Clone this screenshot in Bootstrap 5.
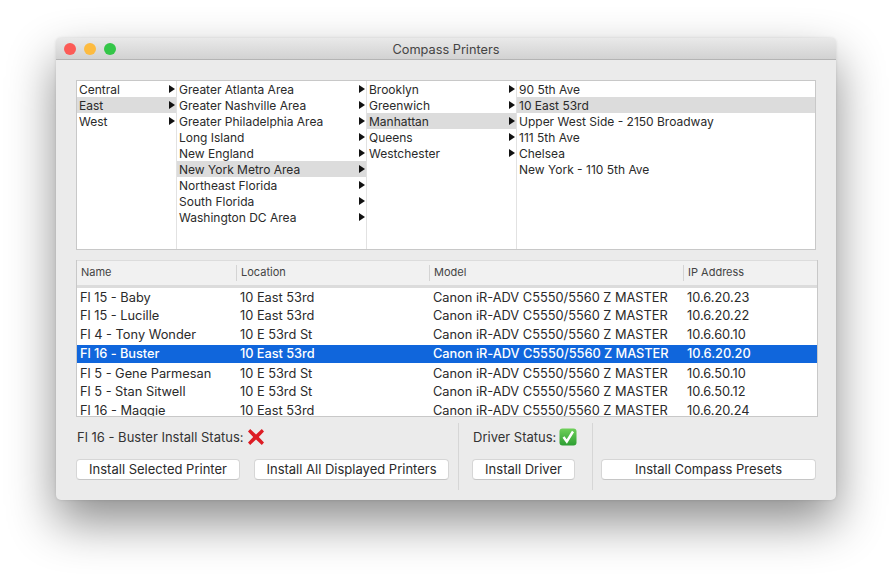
<!DOCTYPE html>
<html lang="en">
    <head>
        <meta charset="UTF-8">
        <title>Compass Printers</title>
        <link rel="stylesheet" href="https://cdn.jsdelivr.net/npm/bootstrap@5.3.0/dist/css/bootstrap.min.css">
        <style>
            body {
                background-color: #fff;
                color: #2a2a2a;
                font-family: "Inter", "Liberation Sans", sans-serif;
                font-size: 13px;
                min-height: 574px;
                padding: 38px 0 0 56px;
            }
            .mac-window {
                width: 780px;
                height: 462px;
                background-color: #ebebeb;
                border-radius: 5px;
                box-shadow: 0 22px 48px rgba(0, 0, 0, .45), 0 0 3px rgba(0, 0, 0, .12);
                overflow: hidden;
            }
            .title-bar {
                height: 22px;
                background: linear-gradient(#e9e9e9, #d2d2d2);
                border-bottom: 1px solid #b4b4b4;
                padding-left: 8px;
                position: relative;
            }
            .title-text {
                width: 100%;
                position: absolute;
                left: 0;
                top: 4px;
                text-align: center;
                color: #444;
                font-size: 12.75px;
                line-height: 16px;
            }
            .light {
                width: 12px;
                height: 12px;
                border-radius: 50%;
            }
            .light-red { background-color: #fc5b57; }
            .light-yellow { background-color: #fdbb40; }
            .light-green { background-color: #34c648; }
            .browser-box {
                width: 740px;
                height: 170px;
                margin: 20px 0 0 20px;
                background-color: #fff;
                border: 1px solid #c8c8c8;
            }
            .browser-col {
                border-right: 1px solid #e2e2e2;
                height: 100%;
                font-size: 12px;
                --bs-list-group-bg: transparent;
                --bs-list-group-border-width: 0;
                --bs-list-group-item-padding-x: 2px;
                --bs-list-group-item-padding-y: 0;
                --bs-list-group-color: #2a2a2a;
            }
            .browser-col .list-group-item {
                height: 16px;
                line-height: 16px;
                white-space: nowrap;
            }
            .browser-col .list-group-item span:first-child { padding-top: 2px; }
            .browser-col .list-group-item.picked { background-color: #dcdcdc; }
            .browser-col:last-child { border-right: 0; }
            .col-region { width: 100px; flex: none; }
            .col-area { width: 190px; flex: none; }
            .col-borough { width: 150px; flex: none; }
            .col-site { flex: 1; }
            .arrow {
                width: 0;
                height: 0;
                border-left: 6px solid #111;
                border-top: 4px solid transparent;
                border-bottom: 4px solid transparent;
                margin-right: -1px;
            }
            .table-box {
                width: 742px;
                height: 157px;
                margin: 10px 0 0 20px;
                background-color: #fff;
                border: 1px solid #c8c8c8;
                border-top: 0;
                overflow: hidden;
            }
            .printer-table {
                table-layout: fixed;
                margin: 0;
                --bs-table-bg: transparent;
                --bs-table-color: #2a2a2a;
                font-size: 12.8px;
            }
            .printer-table th {
                height: 26px;
                padding: 0 4px 3px;
                background-color: #f1f1f1;
                border-top: 1px solid #dcdcdc;
                border-bottom: 3px solid #dcdcdc;
                color: #444;
                font-size: 11px;
                font-weight: 400;
                line-height: 20px;
                position: relative;
            }
            .printer-table th + th::before {
                content: "";
                position: absolute;
                left: -1px;
                top: 4px;
                bottom: 4px;
                border-left: 1px solid #d4d4d4;
            }
            .printer-table td {
                height: 19px;
                padding: 1px 3px 0;
                border: 0;
                line-height: 17px;
                white-space: nowrap;
            }
            .printer-table tr.picked td {
                background-color: #1066dc;
                border-top: 1px solid #fff;
                border-bottom: 1px solid #fff;
                padding-top: 0;
                color: #fff;
                font-weight: 500;
                letter-spacing: -.05px;
            }
            .footer-bar {
                height: 67px;
                margin: 6px 0 0 0;
            }
            .footer-left { width: 402px; flex: none; padding-left: 20px; }
            .footer-mid { width: 134px; flex: none; padding-left: 13px; border-left: 1px solid #d6d6d6; }
            .footer-right { flex: 1; padding-left: 8px; border-left: 1px solid #d6d6d6; }
            .status-line {
                height: 28px;
                display: flex;
                align-items: center;
                gap: 3px;
                color: #333;
            }
            .status-line span { padding: 2px 0 0 1px; }
            .button-row { gap: 14px; }
            .mac-btn {
                height: 21px;
                padding: 0;
                margin-top: 8px;
                background-color: #fff;
                border: 1px solid #d6d6d6;
                border-bottom-color: #c6c6c6;
                border-radius: 4px;
                color: #2a2a2a;
                font-size: 13px;
                line-height: 19px;
            }
            .btn-selected { width: 164px; }
            .btn-all { width: 195px; }
            .btn-driver { width: 103px; }
            .btn-presets { width: 215px; }
        </style>
    </head>
    <body>

        <div class="mac-window d-flex flex-column">
            <div class="title-bar d-flex align-items-center gap-2 flex-shrink-0">
                <div class="light light-red"></div>
                <div class="light light-yellow"></div>
                <div class="light light-green"></div>
                <div class="title-text">Compass Printers</div>
            </div>

            <div class="browser-box d-flex" id="browser"></div>

            <div class="table-box">
                <table class="table printer-table">
                    <colgroup>
                        <col style="width: 160px">
                        <col style="width: 193px">
                        <col style="width: 254px">
                        <col style="width: 133px">
                    </colgroup>
                    <thead>
                        <tr><th>Name</th><th>Location</th><th>Model</th><th>IP Address</th></tr>
                    </thead>
                    <tbody id="printers"></tbody>
                </table>
            </div>

            <div class="footer-bar d-flex">
                <div class="footer-left">
                    <div class="status-line">
                        <span>Fl 16 - Buster Install Status:</span>
                        <svg width="18" height="18" viewBox="0 0 18 18"><path d="M3.200 1 L9 6.500 L14.800 1 L17 3.500 L11.800 9 L17 14.500 L14.800 17 L9 11.500 L3.200 17 L1 14.500 L6.200 9 L1 3.500 Z" fill="#dd1c24"/></svg>
                    </div>
                    <div class="d-flex button-row">
                        <button type="button" class="btn mac-btn btn-selected">Install Selected Printer</button>
                        <button type="button" class="btn mac-btn btn-all">Install All Displayed Printers</button>
                    </div>
                </div>
                <div class="footer-mid">
                    <div class="status-line">
                        <span>Driver Status:</span>
                        <svg width="18" height="18" viewBox="0 0 18 18"><defs><linearGradient id="verde" x1="0" y1="0" x2="0" y2="1"><stop offset="0" stop-color="#6fd05a"/><stop offset="1" stop-color="#2c9e32"/></linearGradient></defs><rect x=".5" y=".5" width="17" height="17" rx="3" fill="url(#verde)"/><path d="M4.500 9 L7.800 13.500 L14 3.500" fill="none" stroke="#fff" stroke-width="2.400"/></svg>
                    </div>
                    <button type="button" class="btn mac-btn btn-driver">Install Driver</button>
                </div>
                <div class="footer-right">
                    <div class="status-line"></div>
                    <button type="button" class="btn mac-btn btn-presets">Install Compass Presets</button>
                </div>
            </div>
        </div>

        <script>
            const columnas = [
                {cls: "col-region", items: [["Central", 1], ["East", 1, 1], ["West", 1]]},
                {cls: "col-area", items: [["Greater Atlanta Area", 1], ["Greater Nashville Area", 1], ["Greater Philadelphia Area", 1], ["Long Island", 1], ["New England", 1], ["New York Metro Area", 1, 1], ["Northeast Florida", 1], ["South Florida", 1], ["Washington DC Area", 1]]},
                {cls: "col-borough", items: [["Brooklyn", 1], ["Greenwich", 1], ["Manhattan", 1, 1], ["Queens", 1], ["Westchester", 1]]},
                {cls: "col-site", items: [["90 5th Ave"], ["10 East 53rd", 0, 1], ["Upper West Side - 2150 Broadway"], ["111 5th Ave"], ["Chelsea"], ["New York - 110 5th Ave"]]}
            ];
            document.getElementById("browser").innerHTML = columnas.map(c => {
                const filas = c.items.map(it => `<div class="list-group-item d-flex justify-content-between align-items-center${it[2] ? " picked" : ""}">
                    <span>${it[0]}</span>${it[1] ? '<span class="arrow"></span>' : ""}</div>`).join("");
                return `<div class="list-group list-group-flush rounded-0 browser-col ${c.cls}">${filas}</div>`;
            }).join("");

            const modelo = "Canon iR-ADV C5550/5560 Z MASTER";
            const impresoras = [
                ["Fl 15 - Baby", "10 East 53rd", "10.6.20.23"],
                ["Fl 15 - Lucille", "10 East 53rd", "10.6.20.22"],
                ["Fl 4 - Tony Wonder", "10 E 53rd St", "10.6.60.10"],
                ["Fl 16 - Buster", "10 East 53rd", "10.6.20.20"],
                ["Fl 5 - Gene Parmesan", "10 E 53rd St", "10.6.50.10"],
                ["Fl 5 - Stan Sitwell", "10 E 53rd St", "10.6.50.12"],
                ["Fl 16 - Maggie", "10 East 53rd", "10.6.20.24"]
            ];
            document.getElementById("printers").innerHTML = impresoras.map(p =>
                `<tr${p[0] == "Fl 16 - Buster" ? ' class="picked"' : ""}><td>${p[0]}</td><td>${p[1]}</td><td>${modelo}</td><td>${p[2]}</td></tr>`
            ).join("");
        </script>
    </body>
</html>
